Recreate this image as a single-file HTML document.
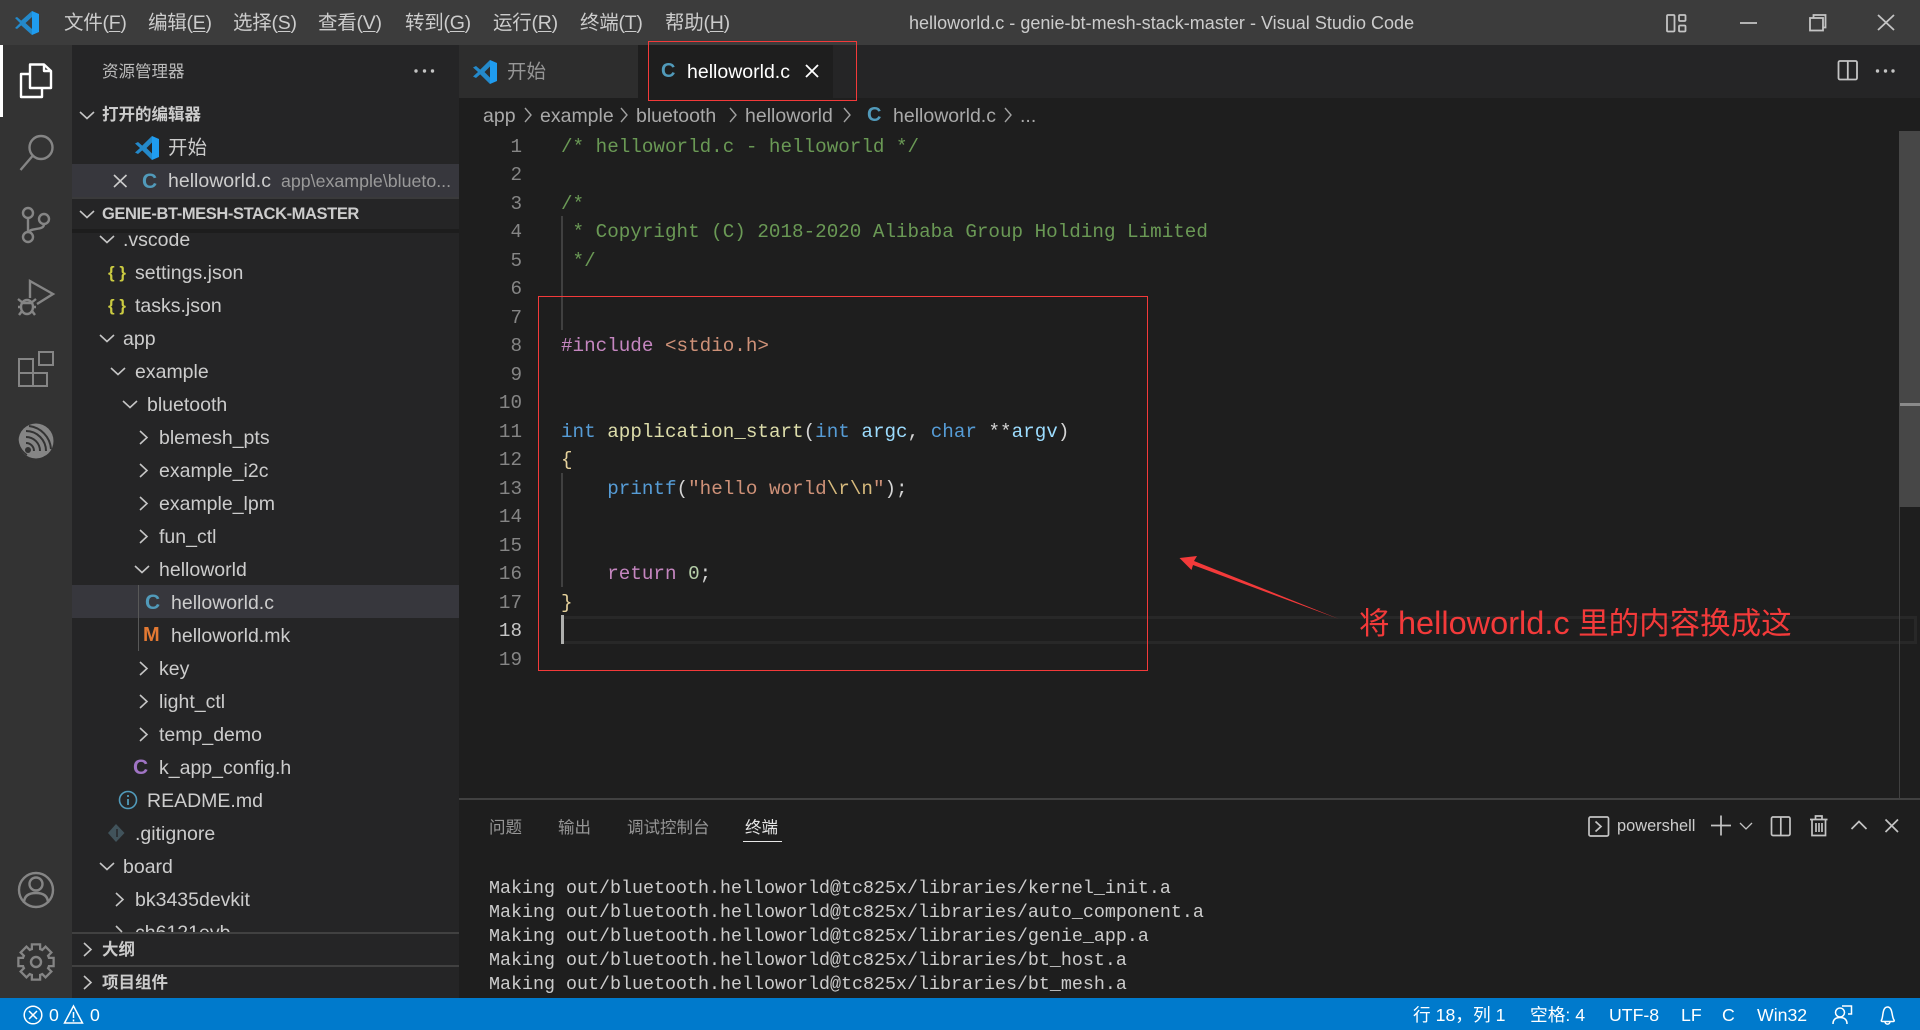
<!DOCTYPE html>
<html lang="zh"><head><meta charset="utf-8"><title>helloworld.c - Visual Studio Code</title>
<style>
html,body{margin:0;padding:0;background:#1e1e1e;width:1920px;height:1030px;overflow:hidden}
body{position:relative;font-family:"Liberation Sans","Noto Sans CJK SC",sans-serif;color:#ccc;font-size:19.5px}
.b{position:absolute}
.t{position:absolute;white-space:pre;line-height:33px;height:33px;margin-top:1px}
.h{font-size:16.5px;font-weight:bold;color:#ccc}
.c{font-weight:bold;color:#519aba;font-size:21px}
.menu{color:#ccc;top:6px;letter-spacing:-.25px}
u{text-decoration:underline;text-underline-offset:2px}
pre{margin:0;position:absolute;font-family:"Liberation Mono","DejaVu Sans Mono",monospace}
.cm{color:#6a9955}.kw{color:#569cd6}.pp{color:#c586c0}.st{color:#ce9178}.fn{color:#dcdcaa}.pa{color:#9cdcfe}.es{color:#d7ba7d}.nu{color:#b5cea8}.br{color:#e6d29c}
.bc{color:#a9a9a9}
.pt{font-size:16.5px;color:#969696;top:811px}
.s{color:#fff;font-size:17.7px;top:998px}
svg{position:absolute;left:0;top:0}
</style></head><body>
<!-- surfaces -->
<div class="b" style="left:0;top:0;width:1920px;height:45px;background:#3c3c3c"></div>
<div class="b" style="left:0;top:45px;width:72px;height:953px;background:#333"></div>
<div class="b" style="left:0;top:45px;width:3px;height:72px;background:#fff"></div>
<div class="b" style="left:72px;top:45px;width:387px;height:953px;background:#252526"></div>
<div class="b" style="left:459px;top:45px;width:1461px;height:53px;background:#252526"></div>
<div class="b" style="left:459px;top:45px;width:179px;height:53px;background:#2d2d2d"></div>
<div class="b" style="left:638px;top:45px;width:195px;height:53px;background:#1e1e1e"></div>
<div class="b" style="left:72px;top:164px;width:387px;height:33px;background:#37373d"></div>
<div class="b" style="left:72px;top:197px;width:387px;height:2px;background:#3a3a3b"></div>
<div class="b" style="left:72px;top:229px;width:387px;height:4px;background:#1d1d1d"></div>
<div class="b" style="left:72px;top:585px;width:387px;height:33px;background:#37373d"></div>
<div class="b" style="left:138px;top:585px;width:1px;height:66px;background:#585858"></div>
<div class="b" style="left:561px;top:616px;width:1353px;height:22px;border:solid #282828;border-width:3px 3px 3px 0"></div>
<div class="b" style="left:561px;top:216px;width:1.5px;height:114px;background:#404040"></div>
<div class="b" style="left:561px;top:473px;width:1.5px;height:114px;background:#404040"></div>
<div class="b" style="left:1899px;top:131px;width:1px;height:668px;background:#404040"></div>
<div class="b" style="left:1899px;top:131px;width:21px;height:376px;background:#474747"></div>
<div class="b" style="left:1900px;top:403px;width:20px;height:3px;background:#8a8a8a"></div>
<div class="b" style="left:459px;top:798px;width:1461px;height:2px;background:#414141"></div>
<div class="b" style="left:561px;top:615px;width:3px;height:29px;background:#aeafad"></div>
<div class="b" style="left:0;top:998px;width:1920px;height:32px;background:#007acc"></div>

<!-- title bar -->
<span class="t menu" style="left:64px">文件(<u>F</u>)</span>
<span class="t menu" style="left:148px">编辑(<u>E</u>)</span>
<span class="t menu" style="left:233px">选择(<u>S</u>)</span>
<span class="t menu" style="left:318px">查看(<u>V</u>)</span>
<span class="t menu" style="left:405px">转到(<u>G</u>)</span>
<span class="t menu" style="left:493px">运行(<u>R</u>)</span>
<span class="t menu" style="left:580px">终端(<u>T</u>)</span>
<span class="t menu" style="left:665px">帮助(<u>H</u>)</span>
<span class="t" style="left:909px;top:6px;font-size:18px;color:#ccc;letter-spacing:.02px">helloworld.c - genie-bt-mesh-stack-master - Visual Studio Code</span>

<!-- sidebar head -->
<span class="t" style="left:102px;top:55px;font-size:16.5px;color:#bbb">资源管理器</span>
<span class="t h" style="left:102px;top:98px">打开的编辑器</span>
<span class="t" style="left:168px;top:131px">开始</span>
<span class="t c" style="left:142px;top:164px">C</span>
<span class="t" style="left:168px;top:164px">helloworld.c</span>
<span class="t" style="left:281px;top:164px;font-size:17.8px;color:#9a9a9a">app\example\blueto...</span>
<span class="t h" style="left:102px;top:197px;letter-spacing:-.4px">GENIE-BT-MESH-STACK-MASTER</span>

<!-- tree -->
<div class="b" style="left:0;top:0;width:1920px;height:1030px;clip-path:inset(233px 1461px 98px 72px)">
<span class="t" style="left:123px;top:223px">.vscode</span>
<span class="t" style="left:108px;top:255px;font-size:17px;font-weight:bold;color:#cbcb41">{ }</span>
<span class="t" style="left:135px;top:256px">settings.json</span>
<span class="t" style="left:108px;top:288px;font-size:17px;font-weight:bold;color:#cbcb41">{ }</span>
<span class="t" style="left:135px;top:289px">tasks.json</span>
<span class="t" style="left:123px;top:322px">app</span>
<span class="t" style="left:135px;top:355px">example</span>
<span class="t" style="left:147px;top:388px">bluetooth</span>
<span class="t" style="left:159px;top:421px">blemesh_pts</span>
<span class="t" style="left:159px;top:454px">example_i2c</span>
<span class="t" style="left:159px;top:487px">example_lpm</span>
<span class="t" style="left:159px;top:520px">fun_ctl</span>
<span class="t" style="left:159px;top:553px">helloworld</span>
<span class="t c" style="left:145px;top:585px">C</span>
<span class="t" style="left:171px;top:586px">helloworld.c</span>
<span class="t" style="left:143px;top:618px;font-size:20px;font-weight:bold;color:#e37933">M</span>
<span class="t" style="left:171px;top:619px">helloworld.mk</span>
<span class="t" style="left:159px;top:652px">key</span>
<span class="t" style="left:159px;top:685px">light_ctl</span>
<span class="t" style="left:159px;top:718px">temp_demo</span>
<span class="t c" style="left:133px;top:750px;color:#a074c4">C</span>
<span class="t" style="left:159px;top:751px">k_app_config.h</span>
<span class="t" style="left:147px;top:784px">README.md</span>
<span class="t" style="left:135px;top:817px">.gitignore</span>
<span class="t" style="left:123px;top:850px">board</span>
<span class="t" style="left:135px;top:883px">bk3435devkit</span>
<span class="t" style="left:135px;top:916px">ch6121evb</span>
</div>
<div class="b" style="left:72px;top:932px;width:387px;height:2px;background:#414141"></div>
<div class="b" style="left:72px;top:965px;width:387px;height:2px;background:#414141"></div>
<span class="t h" style="left:102px;top:933px">大纲</span>
<span class="t h" style="left:102px;top:966px">项目组件</span>

<!-- tabs -->
<span class="t" style="left:507px;top:55px;color:#969696">开始</span>
<span class="t c" style="left:661px;top:54px;font-size:20px">C</span>
<span class="t" style="left:687px;top:55px;color:#fff">helloworld.c</span>

<!-- breadcrumb -->
<span class="t bc" style="left:483px;top:99px">app</span>
<span class="t bc" style="left:540px;top:99px">example</span>
<span class="t bc" style="left:636px;top:99px">bluetooth</span>
<span class="t bc" style="left:745px;top:99px">helloworld</span>
<span class="t c" style="left:867px;top:98px;font-size:20px">C</span>
<span class="t bc" style="left:893px;top:99px">helloworld.c</span>
<span class="t bc" style="left:1020px;top:99px">...</span>

<!-- editor -->
<pre style="left:490px;width:32px;top:132.75px;font-size:19.25px;line-height:28.5px;color:#858585;text-align:right">1
2
3
4
5
6
7
8
9
10
11
12
13
14
15
16
17
<span style="color:#c6c6c6">18</span>
19</pre>
<pre style="left:561px;top:132.75px;font-size:19.25px;line-height:28.5px;color:#d4d4d4"><span class="cm">/* helloworld.c - helloworld */</span>

<span class="cm">/*</span>
<span class="cm"> * Copyright (C) 2018-2020 Alibaba Group Holding Limited</span>
<span class="cm"> */</span>


<span class="pp">#include</span> <span class="st">&lt;stdio.h&gt;</span>


<span class="kw">int</span> <span class="fn">application_start</span>(<span class="kw">int</span> <span class="pa">argc</span>, <span class="kw">char</span> **<span class="pa">argv</span>)
<span class="br">{</span>
    <span class="kw">printf</span>(<span class="st">"hello world</span><span class="es">\r\n</span><span class="st">"</span>);


    <span class="pp">return</span> <span class="nu">0</span>;
<span class="br">}</span></pre>

<!-- panel -->
<span class="t pt" style="left:489px">问题</span>
<span class="t pt" style="left:558px">输出</span>
<span class="t pt" style="left:627px">调试控制台</span>
<span class="t pt" style="left:745px;color:#e7e7e7">终端</span>
<div class="b" style="left:743px;top:841px;width:39px;height:1px;background:#e7e7e7"></div>
<span class="t" style="left:1617px;top:809px;font-size:16.4px;color:#ccc">powershell</span>
<pre style="left:489px;top:877px;font-size:18.33px;line-height:24px;color:#ccc">Making out/bluetooth.helloworld@tc825x/libraries/kernel_init.a
Making out/bluetooth.helloworld@tc825x/libraries/auto_component.a
Making out/bluetooth.helloworld@tc825x/libraries/genie_app.a
Making out/bluetooth.helloworld@tc825x/libraries/bt_host.a
Making out/bluetooth.helloworld@tc825x/libraries/bt_mesh.a</pre>

<!-- status -->
<span class="t s" style="left:49px">0</span>
<span class="t s" style="left:90px">0</span>
<span class="t s" style="left:1413px">行 18，列 1</span>
<span class="t s" style="left:1530px">空格: 4</span>
<span class="t s" style="left:1609px">UTF-8</span>
<span class="t s" style="left:1681px">LF</span>
<span class="t s" style="left:1722px">C</span>
<span class="t s" style="left:1757px">Win32</span>

<!-- annotation -->
<span class="t" style="left:1359px;top:600px;height:44px;line-height:44px;font-size:30.5px;color:#f33a3a">将 <span style="font-size:32.5px">helloworld.c</span> 里的内容换成这</span>
<div class="b" style="left:648px;top:41px;width:207px;height:58px;border:1.5px solid #f33a3a"></div>
<div class="b" style="left:538px;top:295.500px;width:608px;height:373px;border:1.5px solid #f33a3a"></div>

<!-- icons -->
<svg width="1920" height="1030" viewBox="0 0 1920 1030" fill="none">
<!-- logos -->
<path fill="#2489ca" d="M32 11 L21.2 20.6 L17 17 L15 18 L20 23 L15 28 L17 29 L21.2 25.4 L32 35 L32 29 L25.5 23 L32 17Z"/>
<path fill="#1f9cf0" d="M32 11 L39 14 V32 L32 35Z"/>
<g id="lg2">
<path fill="#2489ca" d="M152 136 L142.2 145.600 L138 142 L135 143.500 L140 148 L135 152.500 L138 154 L142.200 150.400 L152 160 V153.500 L146.500 148 L152 142.500Z"/>
<path fill="#1f9cf0" d="M152 136 L159 139 V157 L152 160Z"/>
</g>
<g transform="translate(338,-76)">
<path fill="#2489ca" d="M152 136 L142.2 145.600 L138 142 L135 143.500 L140 148 L135 152.500 L138 154 L142.200 150.400 L152 160 V153.500 L146.500 148 L152 142.500Z"/>
<path fill="#1f9cf0" d="M152 136 L159 139 V157 L152 160Z"/>
</g>
<!-- activity -->
<g stroke="#fff" stroke-width="2.4" stroke-linejoin="round">
<path d="M30 88 V64.500 H44 L51 71 V88 Z M44 64.500 V71 H51"/>
<path d="M30 74 H21 V97 H42 V88"/>
</g>
<g stroke="#858585" stroke-width="2.4">
<circle cx="41" cy="147.500" r="11.500"/><path d="M32.500 156 L20.500 170"/>
<circle cx="28" cy="213" r="5"/><circle cx="28" cy="237" r="5"/><circle cx="44" cy="219" r="5"/>
<path d="M28 218 V232 M44 224 C44 231 32 227 28.500 232"/>
<path d="M30 298 V281 L53 294 L37 304"/>
<ellipse cx="27" cy="307" rx="6" ry="7"/><path d="M21 303 H33 M18 299 L23 303 M36 299 L31 303 M18 307 H21 M33 307 H36 M19 315 L22 311 M35 315 L32 311"/>
<path stroke-width="2" d="M39 352 H53 V365 H39Z M19 359 H33 V373 H47 V386 H19Z M19 373 H33 V386"/>
<circle cx="36" cy="890" r="17"/><circle cx="36" cy="884" r="6.500"/><path d="M24 903 C24 895 30 893 36 893 C42 893 48 895 48 903"/>
</g>
<circle cx="36" cy="441" r="17.500" fill="#858585"/>
<g stroke="#333" stroke-width="2" fill="none">
<path d="M34 451 A8 8 0 0 0 26 443 M40 451 A14 14 0 0 0 26 437 M46 451 A20 20 0 0 0 26 431 M51 449 A25 25 0 0 0 29 426"/>
<path d="M20 429 A20 20 0 0 0 27 455" stroke-width="1.500"/>
<path d="M25 456 A17 17 0 0 0 46 456" stroke-width="1.500"/>
</g>
<circle cx="28" cy="450" r="3" fill="#333"/>
<g transform="translate(36,962)">
<g stroke="#858585" stroke-width="4.500" fill="#858585"><circle r="12.500"/><rect x="-3" y="-16.500" width="6" height="33"/><rect x="-3" y="-16.500" width="6" height="33" transform="rotate(45)"/><rect x="-3" y="-16.500" width="6" height="33" transform="rotate(90)"/><rect x="-3" y="-16.500" width="6" height="33" transform="rotate(135)"/></g>
<g fill="#333"><circle r="12.500"/><rect x="-3" y="-16.500" width="6" height="33"/><rect x="-3" y="-16.500" width="6" height="33" transform="rotate(45)"/><rect x="-3" y="-16.500" width="6" height="33" transform="rotate(90)"/><rect x="-3" y="-16.500" width="6" height="33" transform="rotate(135)"/></g>
<circle r="5" stroke="#858585" stroke-width="2.400"/>
</g>
<!-- title bar right -->
<g stroke="#c4c4c4" stroke-width="1.800">
<rect x="1667" y="15" width="7.500" height="16.500" rx="1"/><rect x="1679" y="15" width="6.500" height="6" rx="1"/><rect x="1679" y="25.500" width="6.500" height="6" rx="1"/>
<path d="M1740 23 H1757"/>
<rect x="1810" y="18" width="13" height="12.500"/><path d="M1813.500 18 V15 H1825.500 V27.500 H1823"/>
<path d="M1878 15 L1894 30 M1894 15 L1878 30"/>
<rect x="1838.500" y="61" width="18.500" height="18.500" rx="1.500"/><path d="M1847.800 61 V79.500"/>
</g>
<g fill="#c4c4c4"><circle cx="1877.500" cy="71" r="1.700"/><circle cx="1885.500" cy="71" r="1.700"/><circle cx="1893" cy="71" r="1.700"/>
<circle cx="416" cy="71" r="1.700"/><circle cx="424.500" cy="71" r="1.700"/><circle cx="432.500" cy="71" r="1.700"/></g>
<!-- sidebar chevrons -->
<g stroke="#c5c5c5" stroke-width="1.600">
<path d="M80 112 L87 118.500 L94 112 M80 211 L87 217.500 L94 211 M100 236 L107 242.500 L114 236 M100 335 L107 341.500 L114 335 M111 368 L118 374.500 L125 368 M123 401 L130 407.500 L137 401 M135 566 L142 572.500 L149 566 M100 863 L107 869.500 L114 863"/>
<path d="M140 431 L147 437.500 L140 444 M140 464 L147 470.500 L140 477 M140 497 L147 503.500 L140 510 M140 530 L147 536.500 L140 543 M140 662 L147 668.500 L140 675 M140 695 L147 701.500 L140 708 M140 728 L147 734.500 L140 741 M116 893 L123 899.500 L116 906 M116 926 L122 932 M84 943 L91 949.500 L84 956 M84 976 L91 982.500 L84 989"/>
<path d="M114 175 L126.500 187 M126.500 175 L114 187" stroke="#ccc"/>
</g>
<circle cx="128" cy="800" r="8.500" stroke="#519aba" stroke-width="1.600"/>
<path d="M128 799 V805 M128 795 V797" stroke="#519aba" stroke-width="1.800"/>
<path d="M116 824 L124.500 833 L116 842 L108 833Z" fill="#41535b"/>
<path d="M117 829 V837" stroke="#252526" stroke-width="1.400"/>
<!-- tab icons -->
<path d="M806 65 L818 77 M818 65 L806 77" stroke="#fff" stroke-width="1.800"/>
<!-- breadcrumb chevrons -->
<g stroke="#a0a0a0" stroke-width="1.400">
<path d="M525 108 L531 115 L525 122 M621 108 L627 115 L621 122 M730 108 L736 115 L730 122 M844 108 L850 115 L844 122 M1005 108 L1011 115 L1005 122"/>
</g>
<!-- panel actions -->
<g stroke="#c4c4c4" stroke-width="1.700">
<rect x="1589" y="817" width="19.500" height="19" rx="1.500"/><path d="M1595.500 821.500 L1601 826.500 L1595.500 831.500"/>
<path d="M1711 825.500 H1731 M1721 815.500 V835.500"/>
<path d="M1740 823 L1746 829 L1752 823" stroke-width="1.300"/>
<rect x="1771.500" y="817" width="18.500" height="18.500" rx="1.500"/><path d="M1780.800 817 V835.500"/>
<path d="M1810 819.500 H1827.500 M1815.500 819 V816 H1822 V819 M1812 819.500 V835.500 H1825.500 V819.500 M1816 823 V832 M1819 823 V832 M1822 823 V832"/>
<path d="M1851.500 829 L1859 821.500 L1866.500 829"/>
<path d="M1885.500 819.500 L1898 832 M1898 819.500 L1885.500 832"/>
</g>
<!-- status icons -->
<g stroke="#fff" stroke-width="1.500">
<circle cx="33" cy="1015" r="8.800"/><path d="M29 1011 L37 1019 M37 1011 L29 1019"/>
<path d="M73.500 1006 L82.500 1023 H64.500Z"/><path d="M73.500 1012 V1018 M73.500 1019.500 V1021.500"/>
<path d="M1842 1006 H1851.500 V1014 H1848"/>
<circle cx="1840" cy="1012.500" r="4.500"/><path d="M1833 1024 C1833 1019 1836 1017.500 1840 1017.500 C1844 1017.500 1847 1019 1847 1024"/>
<path d="M1881.500 1020 C1883.500 1017 1882 1007 1887.500 1007 C1893 1007 1891.500 1017 1894 1020 C1894.500 1021 1894 1021.500 1893 1021.500 H1882.500 C1881.500 1021.500 1881 1021 1881.500 1020Z M1885 1021.500 C1885 1025 1890 1025 1890 1021.500"/>
</g>
<!-- red arrow -->
<path fill="#f33a3a" d="M1179.500 558 L1197 556 L1194 561 L1339 619 L1193 565 L1191.500 570Z"/>
</svg>
</body></html>
